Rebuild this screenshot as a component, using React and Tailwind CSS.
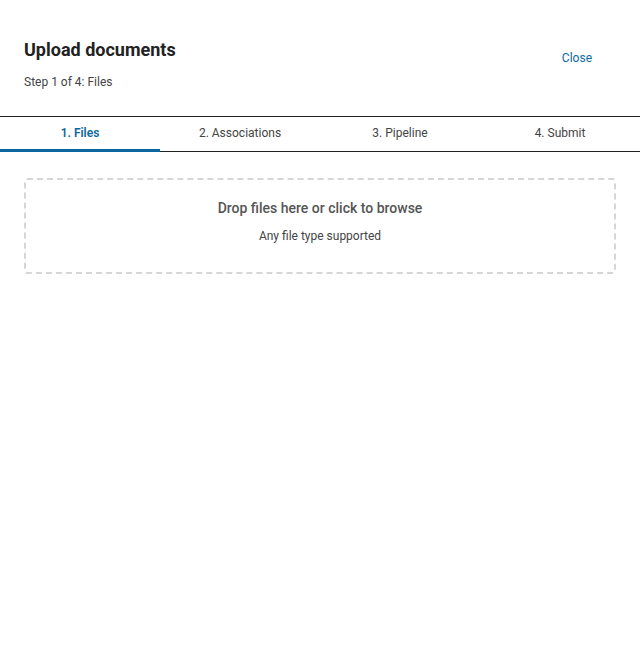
export default function App() {
  const tabs = ["1. Files", "2. Associations", "3. Pipeline", "4. Submit"];
  return (
    <div className="min-h-[650px] w-[640px] bg-white" style={{ fontFamily: "Roboto, 'Liberation Sans', sans-serif" }}>
      <header className="flex items-start justify-between px-6 pt-[38px] pb-[26px]">
        <div>
          <h1 className="text-[18px] font-bold leading-6 text-[#222]">Upload documents</h1>
          <p className="mt-3 text-[12px] leading-4 text-[#444]">Step 1 of 4: Files</p>
        </div>
        <button className="mt-3 px-6 text-[12px] leading-4 text-[#0b6aa2]">Close</button>
      </header>

      <nav className="flex border-y border-[#222]">
        {tabs.map((t, i) => (
          <div
            key={t}
            className={
              i === 0
                ? "-mb-px flex h-[35px] w-[160px] items-center justify-center border-b-[3px] border-[#0b67a0] text-[12px] font-semibold text-[#0b67a0]"
                : "flex h-[34px] w-[160px] items-center justify-center pb-[2px] text-[12px] text-[#444]"
            }
          >
            {t}
          </div>
        ))}
      </nav>

      <div className="px-6 pt-[26px]">
        <div className="flex flex-col items-center rounded-[3px] border-2 border-dashed border-[#d6d6d6] pt-[18px] pb-[28px]">
          <p className="text-[14px] font-medium leading-5 text-[#555]">Drop files here or click to browse</p>
          <p className="mt-[10px] text-[12px] leading-4 text-[#444]">Any file type supported</p>
        </div>
      </div>
    </div>
  );
}
